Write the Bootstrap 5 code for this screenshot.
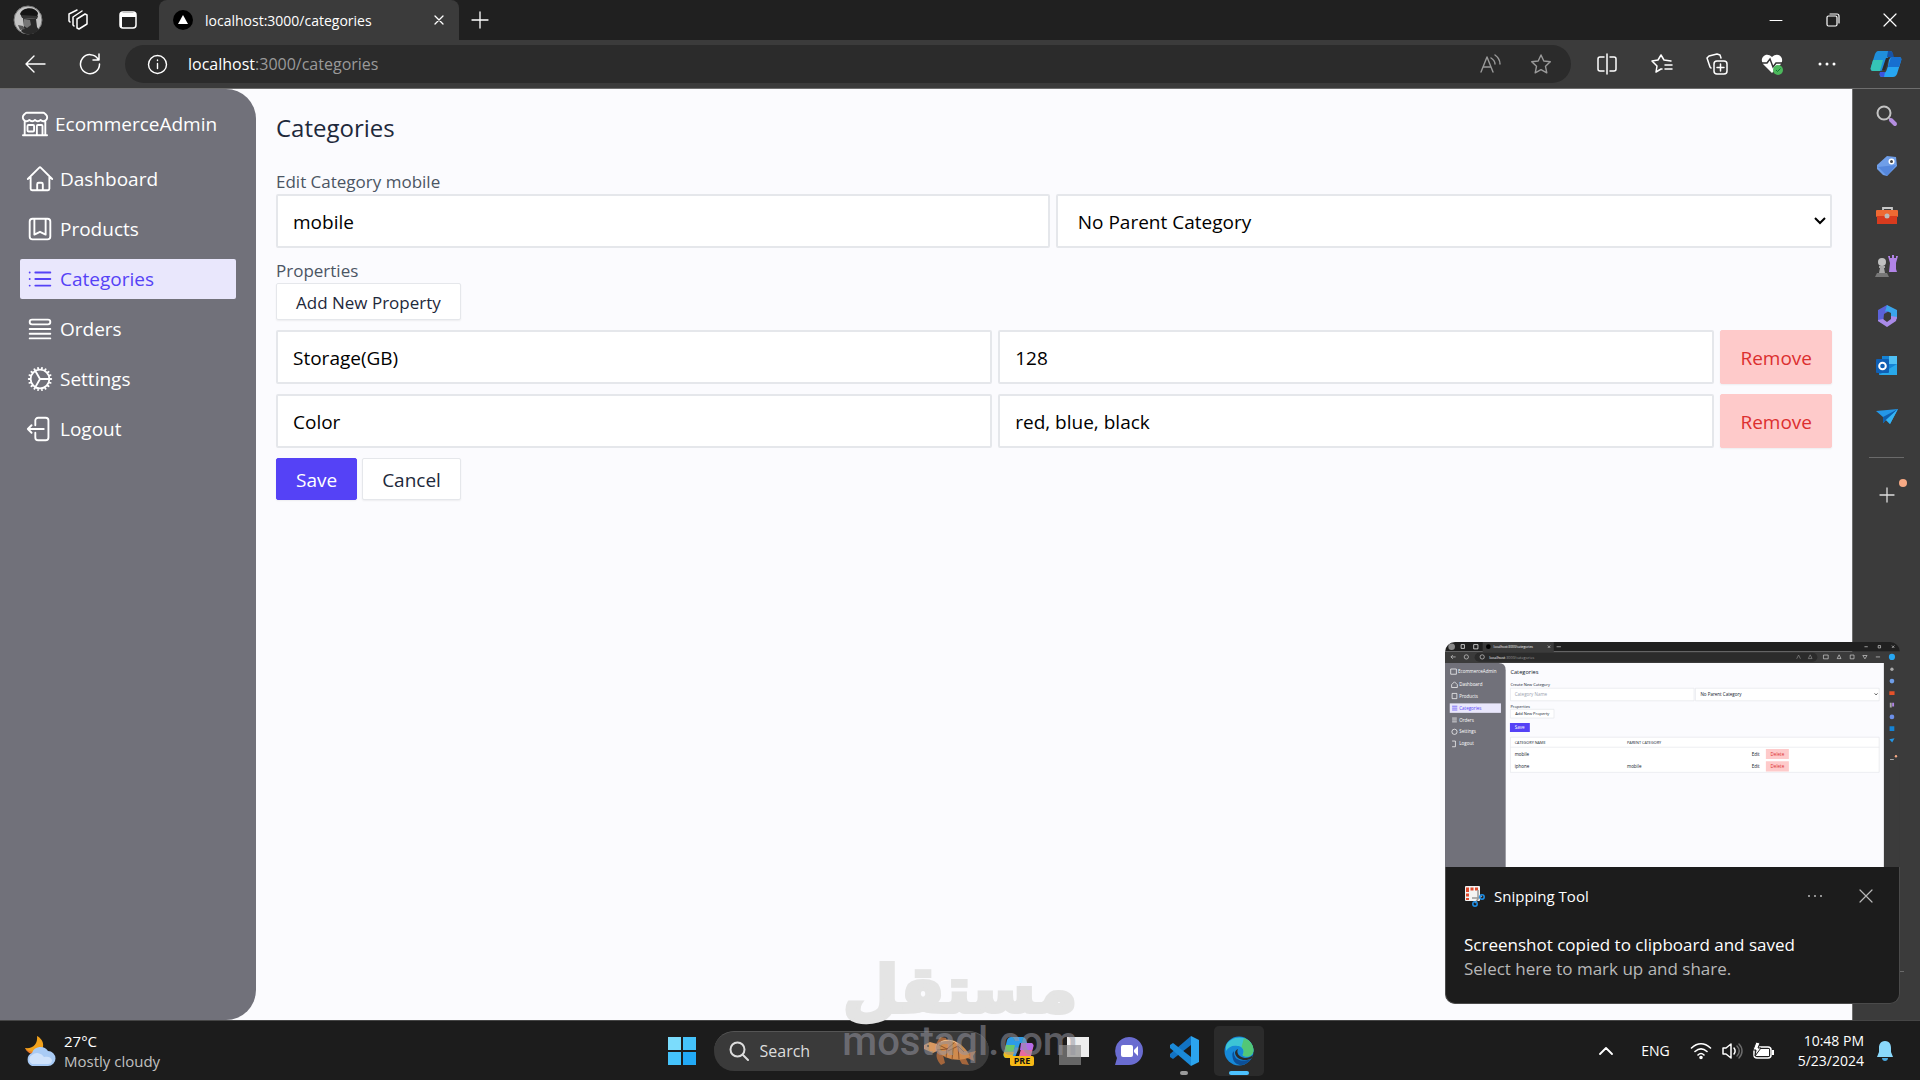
<!DOCTYPE html>
<html lang="en">
<head>
<meta charset="utf-8">
<meta name="viewport" content="width=device-width, initial-scale=1">
<title>localhost:3000/categories</title>
<link href="https://cdn.jsdelivr.net/npm/bootstrap@5.3.0/dist/css/bootstrap.min.css" rel="stylesheet">
<style>
  body { font-family: "Open Sans", "Noto Sans", sans-serif; font-size: 19px; line-height: 1.5; background: #1c1c1c; overflow: hidden; }
  button { font-family: inherit; }
  .bare { background: none; border: 0; padding: 0; color: inherit; display: inline-flex; align-items: center; justify-content: center; }
  svg { display: block; flex: none; }
  .line { fill: none; stroke: currentColor; stroke-linecap: round; stroke-linejoin: round; }

  /* browser frame */
  .tabstrip { height: 40px; background: #202020; color: #fff; padding-right: 2px; }
  .strip-left { width: 159px; padding-left: 13px; }
  .strip-left .bare { width: 30px; height: 30px; margin-right: 20px; }
  .page-tab { width: 300px; height: 40px; background: #3b3b3b; border-radius: 8px 8px 0 0; padding: 0 11px 0 14px; font-size: 14px; }
  .win-btn { width: 57px; height: 40px; }
  .toolbar { height: 49px; background: #3b3b3b; color: #fff; border-bottom: 1px solid #6e6e6e; padding: 0 7px 0 15px; }
  .tool { width: 40px; height: 36px; margin-right: 15px; }
  .address { height: 38px; background: #2b2b2b; border-radius: 19px; padding: 0 10px 0 22px; font-size: 16px; }
  .address .dim { color: #9a9a9a; }
  .ext .bare { width: 55px; height: 36px; }

  /* admin page */
  .page { background: #3b3b3b; }
  .app { background: #fbfbfe; }
  .app-side { width: 256px; background: #71717a; color: #fff; border-radius: 0 30px 30px 0; padding: 20px; }
  .brand-link { color: #fff; gap: 5px; height: 30px; margin-bottom: 20px; }
  .app-side .nav { gap: 10px; }
  .app-side .nav-link { color: #fff; height: 40px; padding: 0 5px; gap: 5px; border-radius: 2px; }
  .app-side .nav-link.active { background: #e9e7fc; color: #5542f6; }
  .app-main { padding: 20px; color: #1e293b; }
  .app-main h1 { font-size: 24px; line-height: 37px; font-weight: 400; margin: 0 0 23px; }
  .app-main label, .field-title { font-size: 17px; line-height: 25px; color: #4b5563; display: block; }
  .box { height: 54px; border: 2px solid #e5e7eb; border-radius: 2px; padding: 2px 15px 0; font-size: 19px; color: #000; background-color: #fff; }
  .box.form-select { padding-left: 20px; background-image: url("data:image/svg+xml,%3Csvg xmlns='http://www.w3.org/2000/svg' viewBox='0 0 12 8'%3E%3Cpath d='M1 1l5 5 5-5' fill='none' stroke='%23000' stroke-width='2'/%3E%3C/svg%3E"); background-size: 12px 8px; background-position: right 4px center; }
  .act { border-radius: 2px; padding: 2px 19px 0; font-size: 19px; line-height: 25px; box-shadow: 0 1px 2px rgba(0,0,0,.06); height: 42px; }
  .act-plain { background: #fff; border: 1px solid #e5e7eb; color: #1e293b; }
  .act-add { font-size: 17px; height: 37px; margin-bottom: 10px; }
  .act-save { background: #5542f6; border: 1px solid #5542f6; color: #fff; }
  .act-remove { background: #fecaca; border: 1px solid #fecaca; color: #dc2f2f; height: 54px; }
  .g-five { gap: 5px; }
  .g-six { gap: 6px; }
  .row-gap { margin-bottom: 10px; }

  /* side bar of the browser */
  .edge-side { width: 68px; border-left: 1px solid #6e6e6e; background: #3b3b3b; color: #ddd; padding-top: 2px; }
  .edge-side .bare { width: 40px; height: 50px; }
  .edge-side .add-app { margin-top: 12px; }
  .edge-rule { width: 35px; height: 1px; background: #6a6a6a; }
  .new-dot { position: absolute; left: 32px; top: 9px; width: 8px; height: 8px; border-radius: 50%; background: #f7a984; }

  /* taskbar */
  .taskbar { height: 60px; background: #1c1c1c; border-top: 1px solid #454545; color: #fff; display: grid; grid-template-columns: 1fr auto 1fr; font-size: 14px; line-height: 20px; }
  .weather { padding-left: 24px; gap: 8px; text-align: left; font-size: 15px; }
  .muted-line { color: #c0c0c0; }
  .tile { width: 50px; height: 50px; border-radius: 5px; position: relative; }
  .tile.on { background: #2b2b2b; }
  .tile .run { position: absolute; bottom: 1px; width: 8px; height: 4px; border-radius: 2px; background: #9a9a9a; }
  .tile.on .run { width: 20px; background: #4cc2ff; }
  .search-pill { width: 275px; height: 40px; border-radius: 20px; background: #3a3a3a; border-top: 1px solid #555; margin-left: 2px; padding: 0 12px 0 15px; }
  .search-pill input { background: none; border: 0; color: #ddd; font-size: 16px; outline: 0; width: 100px; margin-left: 11px; flex: 1 1 auto; min-width: 0; padding: 0; }
  .search-pill input::placeholder { color: #ddd; opacity: 1; }
  .tray { padding-right: 26px; }

  /* floating layers */
  .toast-pop { position: absolute; right: 20px; bottom: 76px; width: 455px; z-index: 5; }
  .shot { border-radius: 10px 10px 0 0; overflow: hidden; }
  .shot svg { width: 100%; height: auto; }
  .toast-text { background: #1c1c1c; border: 1px solid #4a4a4a; border-top: 0; border-radius: 0 0 10px 10px; padding: 14px 18px 22px; color: #fff; font-size: 17px; line-height: 24px; }
  .toast-top { font-size: 15px; height: 30px; margin-bottom: 22px; }
  .toast-text .soft, .toast-top .bare { color: #b8b8b8; }
  .watermark { position: absolute; left: 0; right: 0; bottom: 18px; z-index: 6; text-align: center; pointer-events: none; }
  .wm-ar { font: 700 64px/64px "DejaVu Sans", sans-serif; color: #e4e4e4; -webkit-text-stroke: 4px #e4e4e4; stroke-linejoin: round; }
  .wm-en { font: 500 40px/40px "Roboto", sans-serif; color: rgba(150,150,160,.55); }
</style>
</head>
<body class="vh-100 d-flex flex-column position-relative">

<header>
  <div class="tabstrip d-flex align-items-center">
    <div class="strip-left d-flex align-items-center">
      <button class="bare" aria-label="Profile"><svg width="30" height="30" viewBox="0 0 30 30"><circle cx="15" cy="15" r="14" fill="#c4c4c4" stroke="#777"/><path d="M7 9c2-7 15-8 18-1l-1 5-15-1z" fill="#141414"/><path d="M8 10l17 1-1 3-15-1z" fill="#333"/><path d="M10 13l13 1 1 8 2 3c-5 5-13 6-18 1l3-4z" fill="#2a2a2a"/><path d="M11 14l6 1 1 5-4 3-3-2z" fill="#757575"/><path d="M5 20l5 1 2 3-5 1z" fill="#555"/></svg></button>
      <button class="bare" aria-label="Workspaces"><svg class="line" width="24" height="24" viewBox="0 0 24 24" stroke-width="1.5"><path d="M11 11l8-5 2 1v9l-8 5-2-1zM8 18l-1-1V9l9-6M4 14l-1-1V6l8-4"/></svg></button>
      <button class="bare me-0" aria-label="Tab actions"><svg width="20" height="20" viewBox="0 0 20 20"><rect x="2" y="2" width="16" height="16" rx="3" fill="none" stroke="#fff" stroke-width="1.5"/><path d="M2 3h16v4H2zM2 7h2v10H2z" fill="#fff"/></svg></button>
    </div>
    <div class="page-tab d-flex align-items-center">
      <svg width="20" height="20" viewBox="0 0 20 20"><circle cx="10" cy="10" r="10" fill="#000"/><path d="M10 5l5 9H5z" fill="#fff"/></svg>
      <span class="ms-2 ps-1 flex-fill">localhost:3000/categories</span>
      <button class="bare px-1" aria-label="Close tab"><svg class="line" width="10" height="10" viewBox="0 0 10 10" stroke-width="1.3"><path d="M1 1l8 8M9 1L1 9"/></svg></button>
    </div>
    <button class="bare ms-2 px-1" aria-label="New tab"><svg class="line" width="18" height="18" viewBox="0 0 18 18" stroke-width="1.3"><path d="M9 1v16M1 9h16"/></svg></button>
    <div class="ms-auto d-flex">
      <button class="bare win-btn" aria-label="Minimize"><svg class="line" width="14" height="14" viewBox="0 0 14 14"><path d="M1 7.5h12"/></svg></button>
      <button class="bare win-btn" aria-label="Restore"><svg class="line" width="14" height="14" viewBox="0 0 14 14" stroke-width="1.2"><rect x="1" y="3" width="10" height="10" rx="1.5"/><path d="M4 1h7a2 2 0 012 2v7"/></svg></button>
      <button class="bare win-btn" aria-label="Close window"><svg class="line" width="14" height="14" viewBox="0 0 14 14" stroke-width="1.2"><path d="M1 1l12 12M13 1L1 13"/></svg></button>
    </div>
  </div>
  <div class="toolbar d-flex align-items-center">
    <button class="bare tool" aria-label="Back"><svg class="line" width="22" height="22" viewBox="0 0 22 22" stroke-width="1.4"><path d="M21 11H2M10 3l-8 8 8 8"/></svg></button>
    <button class="bare tool" aria-label="Refresh"><svg class="line" width="22" height="22" viewBox="0 0 22 22" stroke-width="1.5"><path d="M19 6a9.500 9.500 0 101.500 5M20 1v6h-6"/></svg></button>
    <div class="address d-flex align-items-center flex-fill">
      <svg class="line" width="21" height="21" viewBox="0 0 21 21" stroke-width="1.4"><circle cx="10.500" cy="10.500" r="9"/><path d="M10.500 9.500v5M10.500 6v.5"/></svg>
      <span class="flex-fill ps-3 ms-1">localhost<span class="dim">:3000/categories</span></span>
      <button class="bare dim me-1" aria-label="Read aloud"><svg class="line" width="50" height="22" viewBox="0 0 50 22" stroke-width="1.4"><path d="M14 19l6-15 6 15M16 14h8M24 5c3 2 4 4 4 6M28 2c4 3 5 6 5 9"/></svg></button>
      <button class="bare dim" aria-label="Add to favorites"><svg class="line" width="40" height="22" viewBox="0 0 40 22" stroke-width="1.4"><path d="M20 2l2.800 6 6.500.8-4.800 4.500 1.300 6.500-5.800-3.200-5.800 3.200 1.300-6.500-4.800-4.500 6.500-.8z"/></svg></button>
    </div>
    <div class="ext d-flex ps-2">
      <button class="bare" aria-label="Split screen"><svg class="line" width="22" height="22" viewBox="0 0 22 22" stroke-width="1.5"><path d="M8 4H4a2 2 0 00-2 2v10a2 2 0 002 2h4M14 4h4a2 2 0 012 2v10a2 2 0 01-2 2h-4M11 1v20"/></svg></button>
      <button class="bare" aria-label="Favorites"><svg class="line" width="22" height="22" viewBox="0 0 22 22" stroke-width="1.5"><path d="M11 16l-1 0-5 3 1-6-5-5 6-1 3-5 3 5 7 1M14 12h7M14 16h7"/></svg></button>
      <button class="bare" aria-label="Collections"><svg class="line" width="22" height="22" viewBox="0 0 22 22" stroke-width="1.5"><rect x="8" y="8" width="13" height="13" rx="3"/><path d="M14.500 11v7M11 14.500h7M5 15l-1-1-3-9 2-2 8-2 3 1 1 3"/></svg></button>
      <button class="bare" aria-label="Browser essentials"><svg width="24" height="24" viewBox="0 0 24 24"><path d="M12 21L3 12C-1 6 6-1 12 5c6-6 13 1 9 7z" fill="#fff"/><path d="M1 11h6l3-4 3 8 3-4h7" fill="none" stroke="#333" stroke-width="1.500"/><circle cx="18" cy="18" r="5" fill="#4cb85c"/><path d="M16 18l1.500 1.500 3-3" fill="none" stroke="#173" /></svg></button>
      <button class="bare" aria-label="More"><svg width="18" height="6" viewBox="0 0 18 6" fill="#fff"><circle cx="2" cy="3" r="1.500"/><circle cx="9" cy="3" r="1.500"/><circle cx="16" cy="3" r="1.500"/></svg></button>
      <button class="bare ms-1" aria-label="Copilot"><svg width="32" height="28" viewBox="0 0 32 28"><path d="M8 1h12c2 0 3 2 2 4l-4 2-4 11c-1 2-2 3-4 3H3c-2 0-3-2-2-4L5 4c1-2 2-3 3-3z" fill="#1f8fdb"/><path d="M3 10h10l-3 11H3c-2 0-3-2-2-4z" fill="#35c4b5"/><path d="M18 1h2c3 0 3 3 4 6h-7z" fill="#1653a8"/><path d="M21 7h8c2 0 3 2 2 4l-4 13c-1 2-2 3-4 3H12c-2 0-3-2-2-4h4c2 0 3-4 4-7l1-6z" fill="#27a6f2"/><path d="M21 7h8c2 0 3 2 2 4l-2 6H18z" fill="#176fd0"/><path d="M10 22h5l-1 5h-2c-2 0-3-3-2-5z" fill="#3b55e0"/><path d="M16 8h3l-4 12h-3z" fill="#2b2b2b"/></svg></button>
    </div>
  </div>
</header>

<div class="page d-flex flex-fill">
  <div class="app d-flex flex-fill">
    <aside class="app-side">
      <a href="#" class="brand-link d-flex align-items-center text-decoration-none">
        <svg class="line" width="30" height="30" viewBox="0 0 24 24" stroke-width="1.500"><path d="M13.500 21v-7.500a.75.75 0 01.75-.75h3a.75.75 0 01.75.75V21m-4.500 0H2.360m11.140 0H18m0 0h3.640m-1.390 0V9.349m-16.500 11.650V9.350m0 0a3.001 3.001 0 003.750-.615A2.993 2.993 0 009.750 9.750c.896 0 1.700-.393 2.250-1.016a2.993 2.993 0 002.250 1.016c.896 0 1.700-.393 2.250-1.016a3.001 3.001 0 003.750.614m-16.500 0a3.004 3.004 0 01-.621-4.720L4.318 3.440A1.500 1.500 0 015.378 3h13.243a1.500 1.500 0 011.060.440l1.190 1.189a3 3 0 01-.621 4.720m-13.500 8.650h3.750a.75.75 0 00.750-.750V13.500a.75.75 0 00-.750-.750H6.750a.75.75 0 00-.750.750v3.750c0 .415.336.750.750.750z"/></svg>
        <span>EcommerceAdmin</span>
      </a>
      <nav class="nav flex-column">
        <a href="#" class="nav-link d-flex align-items-center"><svg class="line" width="30" height="30" viewBox="0 0 24 24" stroke-width="1.500"><path d="M2.250 12l8.954-8.955c.440-.439 1.152-.439 1.591 0L21.750 12M4.500 9.750v10.125c0 .621.504 1.125 1.125 1.125H9.750v-4.875c0-.621.504-1.125 1.125-1.125h2.250c.621 0 1.125.504 1.125 1.125V21h4.125c.621 0 1.125-.504 1.125-1.125V9.750M8.250 21h8.250"/></svg>Dashboard</a>
        <a href="#" class="nav-link d-flex align-items-center"><svg class="line" width="30" height="30" viewBox="0 0 24 24" stroke-width="1.500"><path d="M16.500 3.750V16.500L12 14.250 7.500 16.500V3.750m9 0H18A2.250 2.250 0 0120.250 6v12A2.250 2.250 0 0118 20.250H6A2.250 2.250 0 013.750 18V6A2.250 2.250 0 016 3.750h1.500m9 0h-9"/></svg>Products</a>
        <a href="#" class="nav-link active d-flex align-items-center" aria-current="page"><svg class="line" width="30" height="30" viewBox="0 0 24 24" stroke-width="1.500"><path d="M8.250 6.750h12M8.250 12h12m-12 5.250h12M3.750 6.750h.008M3.750 12h.008M3.750 17.250h.008"/></svg>Categories</a>
        <a href="#" class="nav-link d-flex align-items-center"><svg class="line" width="30" height="30" viewBox="0 0 24 24" stroke-width="1.500"><path d="M3.750 12h16.500m-16.500 3.750h16.500M3.750 19.500h16.500M5.625 4.500h12.750a1.875 1.875 0 010 3.750H5.625a1.875 1.875 0 010-3.750z"/></svg>Orders</a>
        <a href="#" class="nav-link d-flex align-items-center"><svg class="line" width="30" height="30" viewBox="0 0 24 24" stroke-width="1.500"><path d="M4.500 12a7.500 7.500 0 0015 0m-15 0a7.500 7.500 0 1115 0m-15 0H3m16.500 0H21m-1.500 0H12m-8.457 3.077l1.410-.513m14.095-5.130l1.410-.513M5.106 17.785l1.150-.964m11.490-9.642l1.149-.964M7.501 19.795l.750-1.300m7.500-12.990l.750-1.300m-6.063 16.658l.260-1.477m2.605-14.772l.260-1.477m0 17.726l-.260-1.477M10.698 4.614l-.260-1.477M16.500 19.794l-.750-1.299M7.500 4.205L12 12m6.894 5.785l-1.149-.964M6.256 7.178l-1.150-.964m15.352 8.864l-1.410-.513M4.954 9.435l-1.410-.514M12.002 12l-3.750 6.495"/></svg>Settings</a>
        <a href="#" class="nav-link d-flex align-items-center"><svg class="line" width="30" height="30" viewBox="0 0 24 24" stroke-width="1.500"><path d="M8.250 9V5.250A2.250 2.250 0 0110.500 3h6a2.250 2.250 0 012.250 2.250v13.500A2.250 2.250 0 0116.500 21h-6a2.250 2.250 0 01-2.250-2.250V15m-3 0l-3-3m0 0l3-3m-3 3H15"/></svg>Logout</a>
      </nav>
    </aside>

    <main class="app-main flex-fill">
      <h1>Categories</h1>
      <form onsubmit="return false">
        <label for="catName">Edit Category mobile</label>
        <div class="d-flex g-six row-gap">
          <input id="catName" class="form-control box" type="text" value="mobile">
          <select class="form-select box" aria-label="Parent category"><option>No Parent Category</option></select>
        </div>
        <div class="field-title">Properties</div>
        <button type="button" class="btn act act-plain act-add d-block">Add New Property</button>
        <div class="d-flex g-six row-gap">
          <input class="form-control box" type="text" aria-label="Property name" value="Storage(GB)">
          <input class="form-control box" type="text" aria-label="Property values" value="128">
          <button type="button" class="btn act act-remove">Remove</button>
        </div>
        <div class="d-flex g-six row-gap">
          <input class="form-control box" type="text" aria-label="Property name" value="Color">
          <input class="form-control box" type="text" aria-label="Property values" value="red, blue, black">
          <button type="button" class="btn act act-remove">Remove</button>
        </div>
        <div class="d-flex g-five">
          <button type="submit" class="btn act act-save">Save</button>
          <button type="button" class="btn act act-plain">Cancel</button>
        </div>
      </form>
    </main>
  </div>

  <aside class="edge-side d-flex flex-column align-items-center">
    <button class="bare" aria-label="Search"><svg width="22" height="22" viewBox="0 0 22 22" fill="none"><circle cx="8" cy="8" r="6.500" stroke="#c4c4c4" stroke-width="2"/><path d="M13 13l2 2" stroke="#aaa" stroke-width="2"/><path d="M15 15l4 4" stroke="#b48ee0" stroke-width="4" stroke-linecap="round"/></svg></button>
    <button class="bare" aria-label="Shopping"><svg width="22" height="22" viewBox="0 0 22 22"><path d="M11 1l9 1 1 9-10 10-4-1-6-6V10z" fill="#6f9ee8"/><path d="M2 12l18-2-9 11z" fill="#5587dc"/><circle cx="15.500" cy="6.500" r="3" fill="#fff"/><circle cx="15.500" cy="6.500" r="1.500" fill="#444"/></svg></button>
    <button class="bare" aria-label="Tools"><svg width="22" height="22" viewBox="0 0 22 22"><path d="M7 6V3h9v3" fill="none" stroke="#c8c8c8" stroke-width="1.800"/><rect y="5" width="22" height="7" rx="1" fill="#ee6a33"/><path d="M1 11h20v8H1z" fill="#d83b1e"/><circle cx="11" cy="11" r="2.500" fill="#bbb"/></svg></button>
    <button class="bare" aria-label="Games"><svg width="24" height="24" viewBox="0 0 24 24"><path d="M13 2h2v2h2V1h2v3h2V2h2l-2 7v6l1 3h-8l1-9z" fill="#b184e6"/><circle cx="7" cy="8" r="4" fill="#c0c0c0"/><path d="M4 12h6v2H9l1 5H4l1-5H4z" fill="#a8a8a8"/><path d="M2 19h10l2 4H0z" fill="#777"/></svg></button>
    <button class="bare" aria-label="Microsoft 365"><svg width="22" height="22" viewBox="0 0 22 22"><path d="M11 0L2 5v11l5 3 1-10 7-4z" fill="#5b62d8"/><path d="M11 0l10 5v9l-6-2V8l-4-2-2 1z" fill="#3aa5ea"/><path d="M2 16l9 6 9-6 1-4-6-1v3l-4 3-4-3-5 1z" fill="#a98ae8"/></svg></button>
    <button class="bare" aria-label="Outlook"><svg width="22" height="22" viewBox="0 0 22 22"><path d="M6 1h15v19H3v-4h3z" fill="#1583d5"/><path d="M13 1h8v8h-8z" fill="#4fc0f5"/><path d="M3 20L21 9v11z" fill="#28a8ea"/><rect y="4" width="13" height="14" rx="1" fill="#0f5fb4"/><circle cx="6.500" cy="11" r="3.300" fill="none" stroke="#fff" stroke-width="2"/></svg></button>
    <button class="bare" aria-label="Drop"><svg width="22" height="20" viewBox="0 0 22 20"><path d="M0 5L22 3 14 18l-4-4-3 3V11z" fill="#2497e8"/><path d="M7 11L22 3 10 14l-3 3z" fill="#0d5fae"/><path d="M10 14L22 3l-8 15z" fill="#35b4f4"/></svg></button>
    <div class="edge-rule mt-3"></div>
    <button class="bare position-relative add-app" aria-label="Customize"><svg class="line" width="16" height="16" viewBox="0 0 16 16" stroke-width="1.300"><path d="M8 1v14M1 8h14"/></svg><span class="new-dot"></span></button>
    <div class="edge-rule mt-auto mb-5"></div>
  </aside>
</div>

<footer class="taskbar align-items-center">
  <button class="bare weather justify-content-start">
    <svg width="32" height="32" viewBox="0 0 32 32"><path d="M13 1c8 4 9 15-1 17-5 1-9-1-11-5 8 1 13-4 12-12z" fill="#f2a21c"/><path d="M1 13c5 5 12 5 15 0l-4 6c-5 1-9-2-11-6z" fill="#e8792b"/><path d="M8 31a7 7 0 010-13 9 9 0 0116-2 7.500 7.500 0 010 15z" fill="#a9cbf5"/><path d="M8 29a5 5 0 010-9 8 8 0 0112 2c4-1 7 0 8 3 0 3-2 4-4 4z" fill="#cfe2fb"/></svg>
    <span>27°C<br><span class="muted-line">Mostly cloudy</span></span>
  </button>
  <div class="d-flex align-items-center g-five">
    <button class="bare tile" aria-label="Start"><svg width="30" height="30" viewBox="0 0 30 30"><path d="M1 1h13v13H1z" fill="#7bdcfc"/><path d="M16 1h13v13H16zM1 16h13v13H1z" fill="#45c3fb"/><path d="M16 16h13v13H16z" fill="#22a9f5"/></svg></button>
    <div class="search-pill d-flex align-items-center">
      <svg width="20" height="20" viewBox="0 0 20 20" fill="none" stroke="#ddd" stroke-width="2" stroke-linecap="round"><circle cx="8.500" cy="8.500" r="7"/><path d="M14 14l5 5"/></svg>
      <input type="text" placeholder="Search" aria-label="Search">
      <svg width="54" height="30" viewBox="0 0 54 30"><path d="M15 14c-3 6-1 10 3 15l4-2-2-8zM35 21l4 7 7 1-4-8zM13 8l4-7 6 1 1 5z" fill="#a4663c"/><path d="M44 17l9-2-3 5 1 5-9-4z" fill="#b5723f"/><path d="M1 9l6-3 7 2 2 6-6 3-9-4z" fill="#d99860"/><path d="M13 11C17 2 29 2 37 8c6 5 8 8 10 13-9 5-29 4-34-10z" fill="#d08b4e"/><path d="M16 9l8 4 8-7M24 13l-1 9M24 13l-10 1M25 15l10-5 6 6M35 10l1 13M30 13l-1 11" fill="none" stroke="#8e552d"/><path d="M18 6c5-3 12-2 17 2" fill="none" stroke="#efc08e"/><circle cx="5" cy="10" r="1" fill="#222"/></svg>
    </div>
    <button class="bare tile" aria-label="Copilot preview"><svg width="32" height="30" viewBox="0 0 32 30"><path d="M8 1h11c3 0 4 2 5 6h-7l-4 12c-1 2-2 3-4 3H4c-3 0-4-2-3-5L4 4c1-2 2-3 4-3z" fill="#2d9be8"/><path d="M3 9h9l-3 13H4c-3 0-4-2-3-5z" fill="#6bc76a"/><path d="M1 16h10l-2 6H4c-3 0-4-3-3-6z" fill="#f0bd1b"/><path d="M20 7h7c3 0 4 2 3 5l-3 12H15l3-11z" fill="#e76aa0"/><path d="M18 7h9c3 0 4 2 3 4l-1 3H17z" fill="#b46be8"/><rect x="7" y="20" width="24" height="10" rx="2" fill="#f7b916"/><text x="19" y="28" font-family="Open Sans, sans-serif" font-size="9" font-weight="700" text-anchor="middle" fill="#111">PRE</text></svg></button>
    <button class="bare tile" aria-label="Task view"><svg width="30" height="30" viewBox="0 0 30 30"><path d="M0 9h22v20H0z" fill="#666"/><path d="M8 1h22v20H8z" fill="#eee"/><path d="M8 9h14v12H8z" fill="#aaa"/></svg></button>
    <button class="bare tile" aria-label="Chat"><svg width="30" height="30" viewBox="0 0 30 30"><path d="M15 1a14 14 0 110 28H1l2-7A14 14 0 0115 1z" fill="#6a6cd0"/><rect x="7" y="9" width="12" height="12" rx="2" fill="#fff"/><path d="M20 14l4-4v10l-4-4z" fill="#fff"/></svg></button>
    <button class="bare tile" aria-label="Visual Studio Code"><svg width="30" height="30" viewBox="0 0 30 30"><path d="M22 0l8 4v22l-8 4z" fill="#2ba4ee"/><path d="M22 0v9L4 23l-3-2v-3z" fill="#1273c4"/><path d="M1 9l3-2 18 14v9L1 12z" fill="#1b8ad8"/></svg><span class="run"></span></button>
    <button class="bare tile on" aria-label="Microsoft Edge"><svg width="30" height="30" viewBox="0 0 30 30"><circle cx="15" cy="15" r="14.500" fill="#1689d8"/><path d="M2 10C6-2 28-2 29.500 14c0 7-8 8-11 5 3-4 0-9-5-9-5-1-9 1-11.500 5z" fill="#3cc4d5"/><path d="M20 2c6 2 9.500 7 9.500 12 0 7-8 8-11 5 2-3 1-6-1-8z" fill="#52c777"/><path d="M10 15c-1 8 6 12 17 8-6 9-16 7-18 0-1-4-1-6 1-8z" fill="#0c4f98"/><path d="M14 13c-2 4 1 8 7 9 3 0 6-1 8-3l-1 3c-6 4-16 2-17-5 0-2 1-3 3-4z" fill="#2b2b2b"/></svg><span class="run"></span></button>
  </div>
  <div class="tray d-flex align-items-center justify-content-end">
    <button class="bare" aria-label="Hidden icons"><svg class="line" width="14" height="8" viewBox="0 0 14 8" stroke-width="1.800"><path d="M1 7l6-6 6 6"/></svg></button>
    <button class="bare ms-4 me-3 ps-1">ENG</button>
    <button class="bare g-five mx-1" aria-label="Network, sound and battery">
      <svg class="line" width="22" height="18" viewBox="0 0 22 18" stroke-width="1.600"><path d="M1.500 6c6-5.500 13-5.500 19 0M5 9.500c4-3.500 8-3.500 12 0M8 13c2-2 4-2 6 0"/><circle cx="11" cy="15.500" r="1" fill="currentColor"/></svg>
      <svg class="line ms-1" width="22" height="18" viewBox="0 0 22 18" stroke-width="1.500"><path d="M2 6v6h3l5 4V2L5 6zM13 6c1.500 2 1.500 4 0 6"/><g opacity=".35"><path d="M16 4c3 3 3 7 0 10M18 2c4 4 4 10 0 14"/></g></svg>
      <svg class="ms-1" width="22" height="18" viewBox="0 0 22 18"><rect x="2" y="5" width="17" height="11" rx="3" fill="none" stroke="#fff" stroke-width="1.500"/><path d="M5 7h12v7H4zM20 8h2v5h-2z" fill="#fff"/><path d="M4 0L1 8h3l-1 6 6-8H6l2-5z" fill="#fff" stroke="#1c1c1c"/></svg>
    </button>
    <button class="bare ms-3 ps-1 text-end"><span>10:48 PM<br>5/23/2024</span></button>
    <button class="bare ms-2 ps-1" aria-label="Notifications"><svg width="18" height="20" viewBox="0 0 18 20"><path d="M9 0c-5 0-6 4-6 7v4l-2 5h16l-2-5V7c0-3-1-7-6-7z" fill="#8ad8fb"/><path d="M6 17h6c0 4-6 4-6 0z" fill="#4aa8e0"/></svg></button>
  </div>
</footer>

<div class="toast-pop" role="status">
  <div class="shot">
    <svg viewBox="0 0 1920 950" font-family="Open Sans, sans-serif" font-size="19" fill="#fff">
      <path d="M0 0h1920v40H0z" fill="#202020"/><path d="M0 40h1920v50H0zM159 0h300v40H159zM1852 89h68v861h-68z" fill="#3b3b3b"/>
      <path d="M0 89h1852v861H0z" fill="#fbfbfe"/><path d="M0 89h226q30 0 30 30v831H0z" fill="#71717a"/>
      <rect x="125" y="45" width="1446" height="38" rx="19" fill="#2b2b2b"/>
      <circle cx="28" cy="20" r="14" fill="#888"/><path d="M121 11h18v18h-18zM68 11h14v16H68z" fill="none" stroke="#fff" stroke-width="3"/><circle cx="183" cy="20" r="10" fill="#000"/>
      <text x="205" y="26" font-size="14">localhost:3000/categories</text><text x="187" y="70" font-size="16">localhost<tspan fill="#9a9a9a">:3000/categories</tspan></text>
      <g fill="none" stroke="#ccc" stroke-width="3"><path d="M434 15l10 10m0-10l-10 10M471 20h18M1770 20h14M1828 15h10v10h-10zM1886 15l10 10m0-10l-10 10M45 63H25l8-8m-8 8l8 8M1597 55h20v16h-20zM1655 70l8-16 8 16zM1710 55h16v16h-16zM1763 57h18l-9 14zM1818 63h18"/><circle cx="90" cy="63" r="9"/><circle cx="157" cy="63" r="9"/></g>
      <g fill="none" stroke="#888" stroke-width="3"><path d="M1484 71l8-16 8 16M1533 70l8-16 8 16z"/></g>
      <g fill="none" stroke="#fff" stroke-width="3"><path d="M24 114h24v22H24zM28 180l12-12 12 12v12H28zM30 217h20v22H30zM30 321h20m-20 8h20m-20 8h20M30 418h14v24H30"/><circle cx="40" cy="379" r="11"/></g>
      <rect x="20" y="259" width="216" height="40" fill="#e9e7fc"/><path d="M30 271h22m-22 8h22m-22 8h22" stroke="#5542f6" stroke-width="3"/>
      <text x="55" y="131">EcommerceAdmin</text><text x="60" y="186">Dashboard</text><text x="60" y="236">Products</text><text x="60" y="286" fill="#5542f6">Categories</text><text x="60" y="336">Orders</text><text x="60" y="386">Settings</text><text x="60" y="436">Logout</text>
      <g fill="#fff" stroke="#e5e7eb" stroke-width="3"><path d="M276 195h775v53H276zM1057 195h775v53h-775zM276 284h184v37H276zM276 402h1556v148H276zM276 444h1556"/></g>
      <path d="M274 342h84v38h-84z" fill="#5542f6"/><path d="M1354 451h97v43h-97zM1354 503h97v43h-97z" fill="#fecaca"/>
      <g fill="#0f172a"><text x="276" y="136" font-size="24">Categories</text><text x="276" y="187" font-size="17">Create New Category</text><text x="294" y="228" fill="#9ca3af">Category Name</text><text x="1078" y="228">No Parent Category</text><text x="276" y="278" font-size="17">Properties</text><text x="296" y="309" font-size="17">Add New Property</text>
      <text x="294" y="430" font-size="16">CATEGORY NAME</text><text x="768" y="430" font-size="16">PARENT CATEGORY</text><text x="294" y="480">mobile</text><text x="1294" y="480">Edit</text><text x="294" y="532">iphone</text><text x="768" y="532">mobile</text><text x="1294" y="532">Edit</text></g>
      <text x="294" y="368">Save</text><g fill="#dc2f2f"><text x="1374" y="480">Delete</text><text x="1374" y="532">Delete</text></g>
      <path d="M1813 217l6 6 6-6" fill="none" stroke="#000" stroke-width="3"/>
      <g><circle cx="1886" cy="63" r="13" fill="#27a6f2"/><circle cx="1886" cy="115" r="7" fill="#aaa"/><circle cx="1886" cy="165" r="10" fill="#6f9ee8"/><path d="M1875 208h22v16h-22z" fill="#e5522a"/><path d="M1877 256h8v20h-8z" fill="#aaa"/><path d="M1887 256h8v16h-8z" fill="#b184e6"/><circle cx="1886" cy="316" r="10" fill="#6c8fe8"/><path d="M1876 356h20v20h-20z" fill="#1583d5"/><path d="M1875 410l22-4-10 18z" fill="#2497e8"/><path d="M1878 495h16v3h-16z" fill="#ccc"/><circle cx="1903" cy="482" r="5" fill="#f7a984"/></g>
    </svg>
  </div>
  <div class="toast-text">
    <div class="toast-top d-flex align-items-center">
      <svg width="22" height="22" viewBox="0 0 22 22"><rect x="1" y="1" width="15" height="15" rx="1" fill="#f3f3f3"/><path d="M2 4h12M3.500 4v11" stroke="#e0492b" stroke-width="3" stroke-dasharray="3 1.500"/><path d="M14 5v9l-3 4M8 13h6l4-2" fill="none" stroke="#999" stroke-width="1.500"/><circle cx="18" cy="12" r="2.200" fill="none" stroke="#1d8fe8" stroke-width="1.500"/><circle cx="11" cy="19" r="2.200" fill="none" stroke="#1d8fe8" stroke-width="1.500"/></svg>
      <span class="ms-2 flex-fill">Snipping Tool</span>
      <button class="bare me-4 px-2" aria-label="Options"><svg width="16" height="6" viewBox="0 0 16 6" fill="currentColor"><circle cx="2" cy="3" r="1"/><circle cx="8" cy="3" r="1"/><circle cx="14" cy="3" r="1"/></svg></button>
      <button class="bare me-1 px-1" aria-label="Dismiss"><svg class="line" width="14" height="14" viewBox="0 0 14 14" stroke-width="1.200"><path d="M1 1l12 12M13 1L1 13"/></svg></button>
    </div>
    <div>Screenshot copied to clipboard and saved</div>
    <div class="soft">Select here to mark up and share.</div>
  </div>
</div>

<div class="watermark">
  <div class="wm-ar" lang="ar" dir="rtl">مستقل</div>
  <div class="wm-en">mostaql.com</div>
</div>

<script src="https://cdn.jsdelivr.net/npm/bootstrap@5.3.0/dist/js/bootstrap.bundle.min.js"></script>
</body>
</html>
